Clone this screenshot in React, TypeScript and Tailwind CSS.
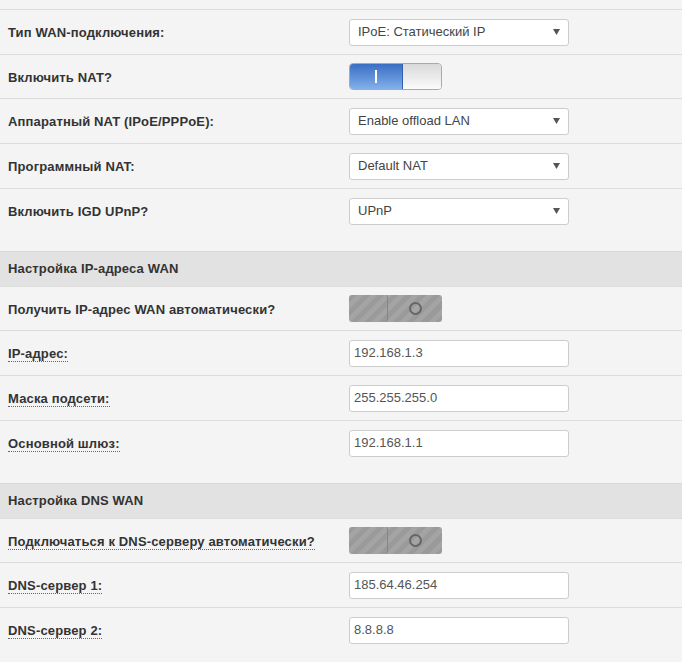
import React from "react";

const font = "font-['Liberation_Sans',Arial,sans-serif]";

function Label({ text, dotted }: { text: string; dotted?: boolean }) {
  return (
    <div className="w-[349px] shrink-0 pl-2">
      <span
        className={
          "text-[13px] font-bold text-[#333] leading-[15px] tracking-[0.15px] " +
          (dotted ? "border-b border-dotted border-[#666]" : "")
        }
      >
        {text}
      </span>
    </div>
  );
}

function Select({ value }: { value: string }) {
  return (
    <div className="w-[220px] h-[27px] bg-white border border-[#cdcdcd] rounded-[3px] flex items-center justify-between pl-[8px] pr-[8px]">
      <span className="text-[13px] text-[#444]">{value}</span>
      <svg width="7" height="6" viewBox="0 0 7 6">
        <path d="M0 0 H7 L3.5 6 Z" fill="#555" />
      </svg>
    </div>
  );
}

function Input({ value }: { value: string }) {
  return (
    <div className="w-[220px] h-[27px] bg-white border border-[#cdcdcd] rounded-[3px] flex items-center pl-[4px]">
      <span className="text-[13px] text-[#555]">{value}</span>
    </div>
  );
}

function ToggleOn() {
  return (
    <div className="w-[93px] h-[27px] flex rounded-[4px] border border-[#aaa] overflow-hidden">
      <div className="w-[53px] h-full bg-gradient-to-b from-[#3a6ec3] to-[#82b0ea] border-r border-[#2f5fae] flex items-center justify-center">
        <div className="w-[2px] h-[13px] bg-white" />
      </div>
      <div className="flex-1 h-full bg-gradient-to-b from-[#d9d9d9] to-[#fbfbfb]" />
    </div>
  );
}

function ToggleOff() {
  return (
    <div className="w-[93px] h-[27px] flex rounded-[3px] overflow-hidden bg-[#9a9a9a] bg-[image:repeating-linear-gradient(135deg,#9a9a9a_0px,#9a9a9a_5px,#a4a4a4_5px,#a4a4a4_10px)]">
      <div className="w-[39px] h-full border-r border-[#868686] rounded-r-[3px]" />
      <div className="flex-1 h-full flex items-center justify-center">
        <div className="w-[13px] h-[13px] rounded-full border-2 border-[#666]" />
      </div>
    </div>
  );
}

function Row({
  label,
  dotted,
  children,
  h,
  last,
}: {
  label: string;
  dotted?: boolean;
  children: React.ReactNode;
  h: string;
  last?: boolean;
}) {
  return (
    <div className={"border-t border-[#dcdcdc] " + h}>
      <div className={"flex items-center " + (last ? "h-[44px]" : "h-full")}>
        <Label text={label} dotted={dotted} />
        {children}
      </div>
    </div>
  );
}

function Header({ text }: { text: string }) {
  return (
    <div className="h-[35px] bg-[#e2e2e2] border-t border-[#d8d8d8] flex items-center pl-2">
      <span className="text-[13px] font-bold text-[#333] tracking-[0.15px]">{text}</span>
    </div>
  );
}

export default function App() {
  return (
    <div className={"w-[682px] h-[662px] overflow-hidden bg-[#f4f4f4] " + font}>
      <div className="h-[9px]" />
      <Row label="Тип WAN-подключения:" h="h-[45px]">
        <Select value="IPoE: Статический IP" />
      </Row>
      <Row label="Включить NAT?" h="h-[44px]">
        <ToggleOn />
      </Row>
      <Row label="Аппаратный NAT (IPoE/PPPoE):" h="h-[45px]">
        <Select value="Enable offload LAN" />
      </Row>
      <Row label="Программный NAT:" h="h-[45px]">
        <Select value="Default NAT" />
      </Row>
      <Row label="Включить IGD UPnP?" h="h-[63px]" last>
        <Select value="UPnP" />
      </Row>
      <Header text="Настройка IP-адреса WAN" />
      <Row label="Получить IP-адрес WAN автоматически?" h="h-[44px]">
        <ToggleOff />
      </Row>
      <Row label="IP-адрес:" dotted h="h-[45px]">
        <Input value="192.168.1.3" />
      </Row>
      <Row label="Маска подсети:" dotted h="h-[45px]">
        <Input value="255.255.255.0" />
      </Row>
      <Row label="Основной шлюз:" dotted h="h-[63px]" last>
        <Input value="192.168.1.1" />
      </Row>
      <Header text="Настройка DNS WAN" />
      <Row label="Подключаться к DNS-серверу автоматически?" dotted h="h-[44px]">
        <ToggleOff />
      </Row>
      <Row label="DNS-сервер 1:" dotted h="h-[45px]">
        <Input value="185.64.46.254" />
      </Row>
      <Row label="DNS-сервер 2:" dotted h="h-[63px]" last>
        <Input value="8.8.8.8" />
      </Row>
    </div>
  );
}
